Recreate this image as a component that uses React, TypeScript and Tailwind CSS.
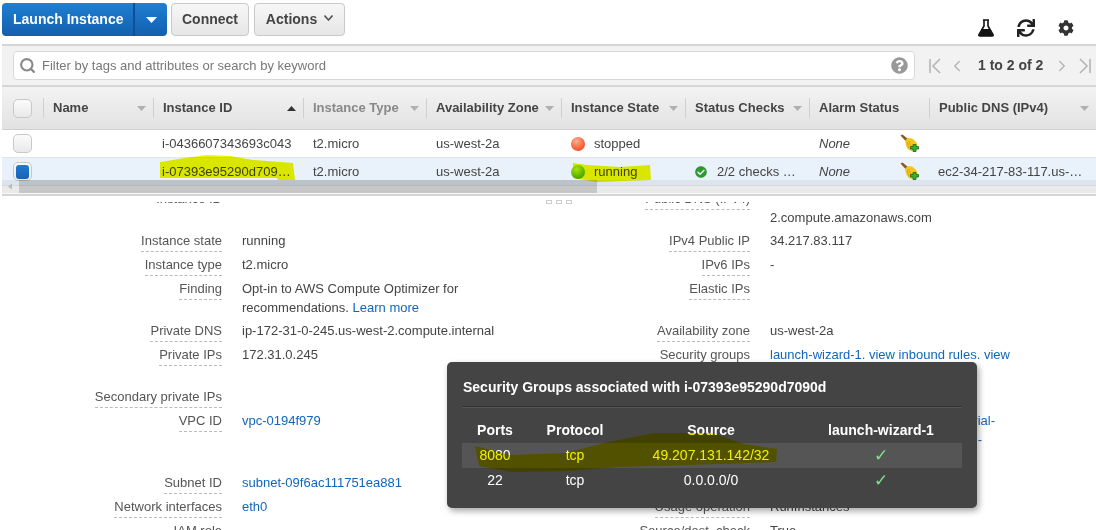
import React from "react";
import { FaCog, FaSync, FaQuestionCircle, FaCheckCircle } from "react-icons/fa";
import { Search, ChevronLeft, ChevronRight } from "lucide-react";

const Tri = ({ up = false, dark = false }: { up?: boolean; dark?: boolean }) => (
  <svg width="9" height="5" viewBox="0 0 9 5" className="shrink-0">
    <path d={up ? "M4.5 0 L9 5 L0 5 Z" : "M0 0 L9 0 L4.5 5 Z"} fill={dark ? "#333" : "#b0b0b0"} />
  </svg>
);

const Broom = () => (
  <svg width="20" height="20" viewBox="0 0 20 20">
    <path d="M0.5 1.5 L2.5 0.5 L8 5 L6 7.5 Z" fill="#8a5a1c" />
    <path d="M5.5 6 L8 4 L12 4.5 C14.5 6 16.5 8 17.5 10.5 L16 13 L12 17 C10 17 8.5 16 7.5 14.5 C6 12 5 9 5.5 6 Z" fill="#f3c61f" />
    <path d="M8.5 7 L11 12 M7 8 L9 14" stroke="#d99a12" strokeWidth="0.8" fill="none" />
    <path d="M10.5 15 L10.5 12.5 L13 12.5 L13 10.5 L16 10.5 L16 12.5 L18.5 12.5 L18.5 15 L16 15 L16 17.5 L13 17.5 L13 15 Z" fill="#35b335" stroke="#0d6b0d" strokeWidth="0.8" />
  </svg>
);

const Check = ({ selected = false }: { selected?: boolean }) => (
  <div className="w-[19px] h-[19px] rounded-[5px] border border-[#c8c8c8] bg-gradient-to-b from-[#fbfbfb] to-[#e9e9e9] flex items-center justify-center">
    {selected && <div className="w-[13px] h-[14px] rounded-[3px] bg-gradient-to-b from-[#2179d0] to-[#1763b5]" />}
  </div>
);

const cols = "grid grid-cols-[41px_110px_150px_123px_135px_124px_124px_120px_167px]";

const Head = ({ label, muted = false, arrow = "down" }: { label: string; muted?: boolean; arrow?: string }) => (
  <div className="h-[20px] border-l border-[#cfcfcf] pl-[9px] pr-[7px] flex items-center justify-between">
    <span className={`font-bold whitespace-nowrap ${muted ? "text-[#888]" : "text-[#444]"}`}>{label}</span>
    {arrow === "down" && <Tri />}
    {arrow === "up" && <Tri up dark />}
  </div>
);

const Cell = ({ children, className = "" }: { children?: React.ReactNode; className?: string }) => (
  <div className={`pl-[10px] flex items-center whitespace-nowrap overflow-hidden ${className}`}>{children}</div>
);

const Bulb = ({ green = false }: { green?: boolean }) => (
  <span
    className={`w-[14px] h-[14px] rounded-full shrink-0 mr-[9px] ${
      green
        ? "bg-[radial-gradient(circle_at_40%_30%,#b9ee3a,#5fb80a_60%,#3c8f05)]"
        : "bg-[radial-gradient(circle_at_40%_30%,#ffb08f,#f4613a_60%,#d9411e)]"
    }`}
  />
);

const Row = ({ selected = false, id, state, green = false, checks, dns }: any) => (
  <div className={`${cols} h-[28px] border-b border-[#e1e4e8] ${selected ? "bg-[#e9f1fb]" : "bg-white"}`}>
    <div className="flex items-center pl-[11px]"><Check selected={selected} /></div>
    <div />
    <Cell className="!pl-[9px]">{id}</Cell>
    <Cell>t2.micro</Cell>
    <Cell>us-west-2a</Cell>
    <Cell><Bulb green={green} />{state}</Cell>
    <Cell>
      {checks && <FaCheckCircle className="text-[#2c9a2c] mr-[10px] w-[12px] h-[12px] shrink-0" />}
      {checks}
    </Cell>
    <div className="flex items-center pl-[10px] pr-[9px] justify-between">
      <span className="italic">None</span>
      <Broom />
    </div>
    <Cell className="!pl-[9px]">{dns}</Cell>
  </div>
);

const Detail = ({ label, h = "h-[24px]", plain = false, children }: { label?: string; h?: string; plain?: boolean; children?: React.ReactNode }) => (
  <div className={`flex ${h}`}>
    <div className="w-[var(--lw)] shrink-0 flex justify-end">
      {label && (
        <span className={`h-[23px] leading-[24px] text-[#555] whitespace-nowrap ${plain ? "" : "border-b border-dashed border-[#bbb]"}`}>{label}</span>
      )}
    </div>
    <div className="pl-[20px] leading-[19px] pt-[2px] text-[#444] flex-1 whitespace-nowrap">{children}</div>
  </div>
);

const Link = ({ children }: { children: React.ReactNode }) => <span className="text-[#1166bb]">{children}</span>;

export default function App() {
  return (
    <div className="relative w-[1096px] h-[530px] overflow-hidden bg-white font-['Liberation_Sans',Arial,sans-serif] text-[13px] text-[#444]">
      <div className="pl-[2px]">
        {/* toolbar */}
        <div className="h-[46px] flex items-start pt-[3px] border-b-2 border-[#d5d5d5]">
          <div className="flex h-[33px] w-[165px] rounded-[4px] overflow-hidden bg-gradient-to-b from-[#1f7fd1] to-[#135fae] text-white">
            <div className="w-[133px] pl-[11px] flex items-center text-[14px] font-bold border-r-2 border-[#0f4f94]">Launch Instance</div>
            <div className="flex-1 flex items-center justify-center">
              <svg width="11" height="6" viewBox="0 0 11 6"><path d="M0 0H11L5.5 6Z" fill="#fff" /></svg>
            </div>
          </div>
          <div className="ml-[4px] w-[78px] h-[33px] rounded-[4px] border border-[#c9c9c9] bg-gradient-to-b from-[#f7f7f7] to-[#e6e6e6] flex items-center justify-center text-[14px] font-bold">Connect</div>
          <div className="ml-[5px] w-[91px] h-[33px] rounded-[4px] border border-[#c9c9c9] bg-gradient-to-b from-[#f7f7f7] to-[#e6e6e6] flex items-center justify-center gap-[7px] text-[14px] font-bold">
            Actions
            <svg width="9" height="6" viewBox="0 0 9 6" className="mb-[3px]"><path d="M0.5 0.5 L4.5 5 L8.5 0.5" fill="none" stroke="#555" strokeWidth="1.6" /></svg>
          </div>
          <div className="ml-auto flex items-center pt-[16px] pr-[22px]">
            <svg width="16" height="18" viewBox="0 0 16 18" className="mr-[23px]">
              <path d="M5 1H11M6 1V7L1 15.5C0.6 16.5 1 17 2 17H14C15 17 15.4 16.5 15 15.5L10 7V1" fill="none" stroke="#111" strokeWidth="1.6" />
              <path d="M4.5 10H11.5L15 17H1Z" fill="#111" />
            </svg>
            <FaSync className="w-[18px] h-[18px] text-[#222] mr-[23px]" />
            <FaCog className="w-[16px] h-[16px] text-[#333]" />
          </div>
        </div>
        {/* filter */}
        <div className="h-[41px] flex items-center bg-[#f2f2f2] border-b-2 border-[#d5d5d5] pl-[11px]">
          <div className="w-[902px] h-[29px] rounded-[4px] bg-white border border-[#d8d8d8] flex items-center pl-[5px] pr-[6px]">
            <Search className="w-[17px] h-[17px] text-[#888] mr-[6px] [stroke-width:3]" />
            <span className="text-[#777] flex-1">Filter by tags and attributes or search by keyword</span>
            <FaQuestionCircle className="w-[17px] h-[17px] text-[#999]" />
          </div>
          <div className="ml-[14px] flex items-center text-[#aaa]">
            <svg width="12" height="16" viewBox="0 0 12 16"><path d="M1 1V15M11 1L4 8L11 15" fill="none" stroke="#b5b5b5" strokeWidth="1.6" /></svg>
            <ChevronLeft className="w-[18px] h-[18px] ml-[7px] text-[#b5b5b5]" />
            <span className="ml-[12px] font-bold text-[14px] text-[#444]">1 to 2 of 2</span>
            <ChevronRight className="w-[18px] h-[18px] ml-[10px] text-[#b5b5b5]" />
            <svg width="12" height="16" viewBox="0 0 12 16" className="ml-[8px]"><path d="M11 1V15M1 1L8 8L1 15" fill="none" stroke="#b5b5b5" strokeWidth="1.6" /></svg>
          </div>
        </div>
        {/* header */}
        <div className={`${cols} h-[43px] items-center bg-gradient-to-b from-[#f3f3f3] to-[#e2e2e2] border-b border-[#d0d0d0]`}>
          <div className="pl-[11px]"><Check /></div>
          <Head label="Name" />
          <Head label="Instance ID" arrow="up" />
          <Head label="Instance Type" muted />
          <Head label="Availability Zone" />
          <Head label="Instance State" />
          <Head label="Status Checks" />
          <Head label="Alarm Status" arrow="none" />
          <Head label="Public DNS (IPv4)" />
        </div>
        <Row id="i-0436607343693c043" state="stopped" />
        <Row selected id="i-07393e95290d709…" state="running" green checks="2/2 checks …" dns="ec2-34-217-83-117.us-…" />
        <div className="h-[10px] bg-[#f7f7f7] border-b-2 border-[#d5d5d5]" />
      </div>

      {/* horizontal scrollbar over the table */}
      <div className="absolute left-[2px] right-0 top-[180px] h-[13px] bg-[#0000000d] flex items-center">
        <svg width="17" height="13" viewBox="0 0 17 13"><path d="M10 3.5 L6 6.5 L10 9.5 Z" fill="#bbb" /></svg>
        <div className="w-[578px] h-[13px] bg-[#00000026]" />
      </div>

      {/* details */}
      <div className="h-[6px] bg-white flex justify-center gap-[4px] pt-[4px] pl-[22px]">
        <span className="w-[6px] h-[4px] border border-[#ccc]" />
        <span className="w-[6px] h-[4px] border border-[#ccc]" />
        <span className="w-[6px] h-[4px] border border-[#ccc]" />
      </div>
      <div className="h-[328px] overflow-hidden">
        <div className="-mt-[15px] flex">
          <div className="w-[540px] shrink-0 [--lw:222px]">
            <Detail label="Instance ID" plain h="h-[42px]" />
            <Detail label="Instance state">running</Detail>
            <Detail label="Instance type">t2.micro</Detail>
            <Detail label="Finding" h="h-[42px]">Opt-in to AWS Compute Optimizer for<br />recommendations. <Link>Learn more</Link></Detail>
            <Detail label="Private DNS">ip-172-31-0-245.us-west-2.compute.internal</Detail>
            <Detail label="Private IPs" h="h-[42px]">172.31.0.245</Detail>
            <Detail label="Secondary private IPs" />
            <Detail label="VPC ID" h="h-[62px]"><Link>vpc-0194f979</Link></Detail>
            <Detail label="Subnet ID"><Link>subnet-09f6ac111751ea881</Link></Detail>
            <Detail label="Network interfaces"><Link>eth0</Link></Detail>
            <Detail label="IAM role" />
          </div>
          <div className="flex-1 [--lw:210px]">
            <Detail label="Public DNS (IPv4)" h="h-[42px]"><span className="block pt-[19px]">2.compute.amazonaws.com</span></Detail>
            <Detail label="IPv4 Public IP">34.217.83.117</Detail>
            <Detail label="IPv6 IPs">-</Detail>
            <Detail label="Elastic IPs" h="h-[42px]" />
            <Detail label="Availability zone">us-west-2a</Detail>
            <Detail label="Security groups" h="h-[66px]"><Link>launch-wizard-1. view inbound rules. view</Link></Detail>
            <div className="h-[86px] pt-[2px] pl-[230px]">
              <div className="w-[225px] text-right leading-[19px] text-[#1166bb]">tutorial-<br /><span className="pr-[13px]">i-</span></div>
            </div>
            <Detail label="Usage operation">RunInstances</Detail>
            <Detail label="Source/dest. check">True</Detail>
          </div>
        </div>
      </div>

      {/* security group popover */}
      <div className="absolute left-[447px] top-[362px] w-[530px] h-[146px] rounded-[5px] bg-[#444444] shadow-[2px_3px_6px_rgba(0,0,0,0.35)] text-white px-[15px]">
        <div className="h-[45px] pt-[18px] pl-[1px] leading-[15px] text-[14px] font-bold border-b border-[#333] shadow-[0_1px_0_#555] whitespace-nowrap">Security Groups associated with i-07393e95290d7090d</div>
        <div className="grid grid-cols-[66px_94px_178px_162px] text-[14px] text-center mt-[11px]">
          <div className="h-[25px] leading-[25px] font-bold">Ports</div>
          <div className="h-[25px] leading-[25px] font-bold">Protocol</div>
          <div className="h-[25px] leading-[25px] font-bold">Source</div>
          <div className="h-[25px] leading-[25px] font-bold">launch-wizard-1</div>
          <div className="h-[25px] leading-[25px] bg-[#555555]">8080</div>
          <div className="h-[25px] leading-[25px] bg-[#555555]">tcp</div>
          <div className="h-[25px] leading-[25px] bg-[#555555]">49.207.131.142/32</div>
          <div className="h-[25px] leading-[25px] bg-[#555555] text-[#7fe08a] text-[17px] font-bold font-['DejaVu_Sans',sans-serif]">✓</div>
          <div className="h-[25px] leading-[25px]">22</div>
          <div className="h-[25px] leading-[25px]">tcp</div>
          <div className="h-[25px] leading-[25px]">0.0.0.0/0</div>
          <div className="h-[25px] leading-[25px] text-[#7fe08a] text-[17px] font-bold font-['DejaVu_Sans',sans-serif]">✓</div>
        </div>
      </div>

      {/* highlighter scribbles drawn on the screenshot */}
      <svg width="1096" height="530" viewBox="0 0 1096 530" className="absolute inset-0 mix-blend-multiply pointer-events-none">
        <path d="M160 162 L185 158 L207 155 L230 156 L253 160 L293 163 L295 180 L278 180 L277 178 L210 178 L160 178 Z" fill="#eef500" />
        <path d="M573 163 L587 165 L620 167 L650 165 L651 180 L597 182 L573 178 Z" fill="#eef500" />
        <path d="M475 446 L511 455 L565 453 L604 443 L654 433 L711 433 L744 444 L777 449 L776 462 L690 465 L619 467 L565 471 L511 472 L479 466 Z" fill="#f2f200" />
      </svg>
    </div>
  );
}
